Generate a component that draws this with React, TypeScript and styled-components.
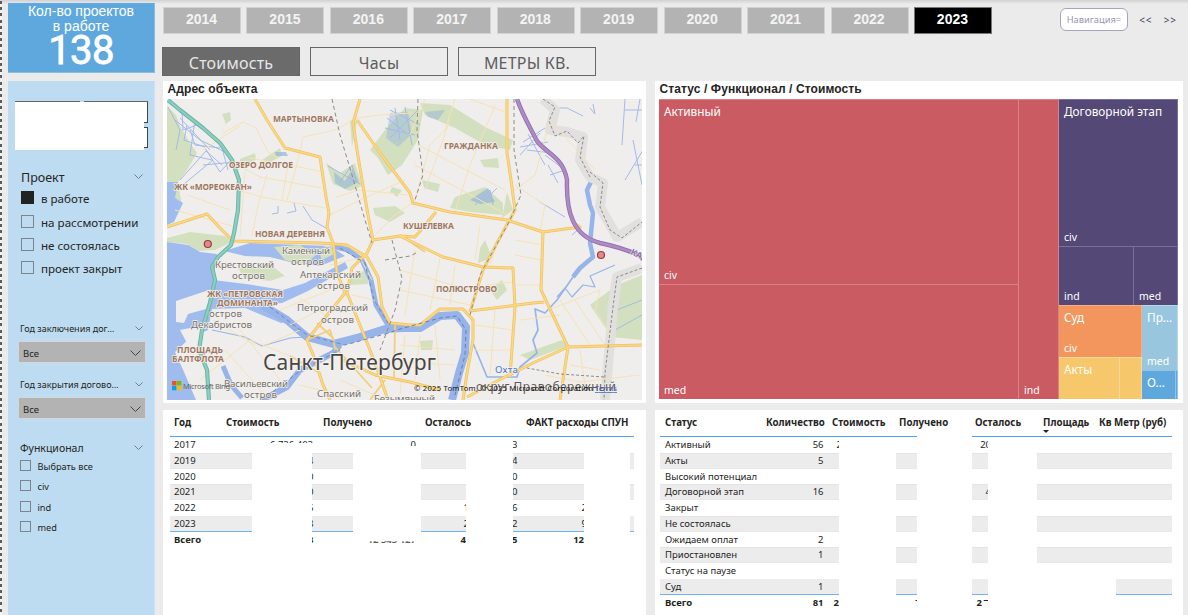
import React from 'react';
import styled, { createGlobalStyle } from 'styled-components';

const Global = createGlobalStyle`
  * { box-sizing: border-box; }
  body { margin: 0; overflow: hidden; }
`;

const ui = `'Noto Sans', 'Open Sans', sans-serif`;
const arial = `'Liberation Sans', Arial, sans-serif`;

const Page = styled.div`
  width: 1188px;
  height: 615px;
  overflow: hidden;
  display: flex;
  gap: 8px;
  padding: 3px 5px 0 0;
  background:
    repeating-linear-gradient(to bottom, #5c5c5c 0 3px, #f4f4f4 3px 6.2px) 0 1px / 2px 100% no-repeat,
    linear-gradient(#d2d2d2, #ebebeb) 0 0 / 100% 4px no-repeat,
    #ebebeb;
  color: #252423;
  font-family: ${ui};
`;

const Sidebar = styled.aside`
  width: 147px;
  margin-left: 8px;
  display: flex;
  flex-direction: column;
  gap: 8px;
  flex: none;
`;

const CountCard = styled.div`
  height: 70px;
  background: #5ea8dd;
  border: 1px solid #86bde6;
  border-width: 0 1px 1px 0;
  color: #fff;
  text-align: center;
  font: 14px/15px ${arial};
  padding-top: 1px;
`;
const CountNumber = styled.div`
  font: 400 40px/36px Roboto, sans-serif;
  margin: -1px 0 0 0;
  letter-spacing: -0.6px;
  -webkit-text-stroke: 0.8px #fff;
`;

const Filters = styled.div`
  flex: 1;
  background: #bddcf1;
  border-right: 1px solid #cbe3f4;
  padding: 20px 7px 0 7px;
`;
const SearchBox = styled.div`
  width: 133px;
  height: 49px;
  background:
    linear-gradient(#666, #666) 0 0 / 65px 1px no-repeat,
    linear-gradient(#666, #666) 69px 0 / 64px 1px no-repeat,
    linear-gradient(#444, #444) 132px 0 / 1px 21px no-repeat,
    linear-gradient(#444, #444) 129px 21px / 4px 1px no-repeat,
    linear-gradient(#444, #444) 129px 26px / 4px 1px no-repeat,
    linear-gradient(#444, #444) 132px 26px / 1px 21px no-repeat,
    linear-gradient(#444, #444) 129px 46px / 4px 1px no-repeat,
    linear-gradient(#fff, #fff) 0 1px / 129px 48px no-repeat,
    linear-gradient(#fff, #fff) 129px 1px / 3px 20px no-repeat,
    linear-gradient(#fff, #fff) 129px 27px / 3px 19px no-repeat;
`;

const FilterHead = styled.div<{ $top: number; $size: number; $x?: number }>`
  display: flex;
  align-items: center;
  justify-content: space-between;
  height: 16px;
  margin: ${p => p.$top}px 4px 0 ${p => p.$x ?? 6}px;
  font-size: ${p => p.$size}px;
  white-space: nowrap;
`;
const Option = styled.div<{ $h: number; $size: number; $gap: number; $x: number }>`
  display: flex;
  align-items: center;
  height: ${p => p.$h}px;
  gap: ${p => p.$gap}px;
  padding-left: ${p => p.$x}px;
  font-size: ${p => p.$size}px;
  white-space: nowrap;
`;
const Box = styled.span<{ $s: number; $on?: boolean }>`
  width: ${p => p.$s}px;
  height: ${p => p.$s}px;
  flex: none;
  margin-bottom: 2px;
  border: 1px solid ${p => (p.$on ? '#222' : '#7d858c')};
  background: ${p => (p.$on ? '#222' : 'transparent')};
`;
const Dropdown = styled.div`
  display: flex;
  align-items: center;
  justify-content: space-between;
  width: 128px;
  height: 22px;
  margin: 4px 0 0 3px;
  padding: 3px 4px 0 4px;
  background: #b3b3b3;
  border: 1px solid #d6d6d6;
  font-size: 9.5px;
`;

const Chevron = ({ w = 9, color = '#6f7f8b' }: { w?: number; color?: string }) => (
  <svg width={w} height={w / 2 + 1} viewBox={`0 0 ${w} ${w / 2 + 1}`} fill="none" stroke={color}>
    <path d={`M.5 .5L${w / 2} ${w / 2}L${w - 0.5} .5`} />
  </svg>
);

const Main = styled.main`
  width: 1020px;
  display: flex;
  flex-direction: column;
  flex: none;
`;
const YearRow = styled.div`
  display: flex;
  align-items: center;
  gap: 5.45px;
  height: 26px;
  margin-top: 4px;
`;
const Year = styled.div<{ $on?: boolean }>`
  width: 78px;
  height: 27px;
  flex: none;
  text-align: center;
  font: bold 14px/22px ${arial};
  padding-right: 1px;
  color: ${p => (p.$on ? '#fff' : '#f4f4f4')};
  background: ${p => (p.$on ? '#000' : '#b3b3b3')};
  border: 1px solid ${p => (p.$on ? '#777' : '#d2d2d2')};
`;
const NavButton = styled.div`
  width: 68px;
  height: 23px;
  margin: -2px 0 0 62.5px;
  border: 1px solid #a8a3be;
  border-radius: 6px;
  background: #fff;
  color: #9b95b3;
  font-size: 9.3px;
  line-height: 22px;
  text-align: center;
`;
const NavArrow = styled.span`
  margin-left: 6px;
  margin-top: -1px;
  font: 10px/20px ${ui};
  letter-spacing: 0.8px;
  color: #463f66;
`;
const ModeRow = styled.div`
  display: flex;
  gap: 10px;
  margin: 14px 0 5px -1px;
`;
const Mode = styled.div<{ $on?: boolean }>`
  width: 138px;
  height: 29px;
  font-size: 16px;
  line-height: 30px;
  text-align: center;
  letter-spacing: 0.2px;
  background: ${p => (p.$on ? '#6b6b6b' : '#ebebeb')};
  color: ${p => (p.$on ? '#e6e6e6' : '#5c5c5c')};
  border: 1px solid #666;
`;

const Panels = styled.div`
  display: grid;
  grid-template-columns: 483px 528px;
  grid-template-rows: 322px 205px;
  gap: 7px 9px;
`;
const Panel = styled.section`
  background: #fff;
  overflow: hidden;
`;
const Title = styled.h2`
  margin: 0 0 0 4.5px;
  height: 18px;
  font: bold 12px/17px ${arial};
  letter-spacing: 0.1px;
`;

/* ---------- treemap ---------- */
const Tree = styled.div`
  display: flex;
  width: 520px;
  height: 300px;
  margin-left: 4px;
  color: #fff;
`;
const Stack = styled.div<{ $w?: number; $h?: number; $row?: boolean }>`
  display: flex;
  flex-direction: ${p => (p.$row ? 'row' : 'column')};
  flex: none;
  ${p => p.$w && `width: ${p.$w}px;`}
  ${p => p.$h && `height: ${p.$h}px;`}
`;
const Tile = styled.div<{ $c: string; $line: string; $w?: number; $h?: number; $bare?: boolean }>`
  display: flex;
  flex-direction: column;
  flex: none;
  ${p => p.$w && `width: ${p.$w}px;`}
  ${p => p.$h && `height: ${p.$h}px;`}
  background: ${p => p.$c};
  border: solid ${p => p.$line};
  border-width: 1px 1px 0 0;
  padding: ${p => (p.$bare ? '0' : '3px 0 2px 5px')};
  font-size: 10.5px;
  line-height: 14px;
  white-space: nowrap;
  overflow: hidden;
`;
const Cat = styled.div`
  font-size: 11.8px;
  line-height: 16px;
`;
const Leaf = styled.div`
  margin-top: auto;
`;
const red = { $c: '#ca5b62', $line: '#d98389' };
const violet = { $c: '#544877', $line: '#796f97' };
const orange = { $c: '#f2965e', $line: '#f6b083' };
const yellow = { $c: '#f6c76b', $line: '#f9d996' };
const sky = { $c: '#99c6df', $line: '#b7d8ea' };
const blue = { $c: '#5ea8dd', $line: '#8fc3e8' };

/* ---------- tables ---------- */
const Table = styled.div<{ $pad: number }>`
  padding-left: ${p => p.$pad}px;
  font-size: 9.5px;
  line-height: 16px;
  white-space: nowrap;
`;
const Head = styled.div<{ $cols: string }>`
  display: grid;
  grid-template-columns: ${p => p.$cols};
  height: 26px;
  padding-top: 5px;
  font-weight: bold;
  font-size: 9.7px;
`;
const Rule = styled.div`
  display: flex;
  height: 1px;
`;
const Line = styled.i<{ $w: number; $hidden?: boolean }>`
  width: ${p => p.$w}px;
  background: ${p => (p.$hidden ? 'transparent' : '#4ca3ea')};
`;
const Row = styled.div<{ $bold?: boolean }>`
  display: flex;
  height: 15.75px;
  font-weight: ${p => (p.$bold ? 'bold' : 'normal')};
`;
const Seg = styled.div<{ $w: number; $band?: boolean; $last?: boolean; $pad?: number; $right?: boolean; $h?: number }>`
  width: ${p => p.$w}px;
  height: ${p => p.$h ?? 15.75}px;
  flex: none;
  display: flex;
  justify-content: ${p => (p.$right ? 'flex-end' : 'flex-start')};
  padding-left: ${p => p.$pad ?? 0}px;
  overflow: hidden;
  background: ${p => (p.$band ? '#ececec' : 'transparent')};
  box-shadow: ${p =>
    p.$last ? 'inset 0 -1px #6db4f0' : p.$band ? 'inset 0 1px #e4e4e4, inset 0 -1px #e8e8e8' : 'none'};
`;
const Space = styled.div<{ $w: number; $h?: number; $cut?: number; $pr?: number }>`
  width: ${p => p.$w}px;
  height: ${p => p.$h ?? 15.75}px;
  flex: none;
  overflow: hidden;
  display: flex;
  justify-content: flex-end;
  padding-right: ${p => p.$pr ?? 0}px;
  clip-path: inset(${p => p.$cut ?? 0}px 0 0 0);
`;
const Shift = styled.span<{ $x: number }>`
  margin-left: ${p => p.$x}px;
`;
const RightShift = styled.span<{ $x: number }>`
  margin-right: ${p => p.$x}px;
`;
const End = styled.span<{ $over?: number }>`
  margin-left: auto;
  margin-right: ${p => -(p.$over ?? 0)}px;
`;
const HeadCell = styled.span`
  line-height: 16px;
`;
const SortMark = styled.svg`
  display: block;
  margin-top: -1px;
`;

const yearRows = [
  { y: '2017', a: '3', c: '', d: '3', e: '' },
  { y: '2019', a: '4', c: '', d: '4', e: '' },
  { y: '2020', a: '0', c: '', d: '0', e: '' },
  { y: '2021', a: '0', c: '', d: '0', e: '' },
  { y: '2022', a: '6', c: '1', d: '6', e: '2' },
  { y: '2023', a: '8', c: '2', d: '2', e: '9' },
];

const statusRows = [
  ['Активный', '56', '2', '20'],
  ['Акты', '5', '', ''],
  ['Высокий потенциал', '', '', ''],
  ['Договорной этап', '16', '', '4'],
  ['Закрыт', '', '', ''],
  ['Не состоялась', '', '', ''],
  ['Ожидаем оплат', '2', '', ''],
  ['Приостановлен', '1', '', ''],
  ['Статус на паузе', '', '', ''],
  ['Суд', '1', '', ''],
];

/* ---------- map ---------- */
const MapSvg = styled.svg`
  display: block;
  margin-left: 4px;
  font-family: ${ui};
`;

const mainRoads = [
  'M255 99L267 120L285 148L320 157L326 197L329 213L327 227L333 243L337 273L345 293L307 340L314 357L323 385L330 400',
  'M360 99L353 123L357 150L362 180L368 215L373 240',
  'M357 120L380 153L410 193L413 203L450 212L507 220L543 232L580 227L572 222',
  'M507 99L507 153L511 180L515 210L497 243L483 270L470 312',
  'M543 232L541 290L568 347L560 400',
  'M400 236L443 257L483 267L513 268L515 307L510 377',
  'M470 311L533 303L544 302',
  'M642 345L568 347L533 363L503 378L467 397',
  'M167 227L207 214L220 228L233 241L320 243L347 245L367 257L378 277L382 307L390 323L410 325L420 325L440 309L463 309L473 320L473 340L467 373L463 400',
  'M347 293L352 268L367 253L373 240L400 236L415 237L436 212',
  'M347 293L370 350L380 377L388 400',
  'M343 360L375 375L410 382L440 390',
];
const secondRoads = [
  'M395 325L394 380M307 340L330 330L335 347L372 388M317 323L333 338L335 350',
  'M385 380L370 400M400 235L425 252M290 356L318 372',
];
const minorRoads = [
  'M223 133L243 122L256 128L268 152L278 158M203 150L240 126M303 137L298 160L287 200M303 137L335 130L350 122',
  'M237 165L260 177L322 188M238 190L262 197L325 208M267 175L258 205L252 236M288 165L282 200M245 172L240 236M250 158L325 172',
  'M356 118L380 115L412 113M336 197L360 190L408 195M330 215L360 200L405 180M370 240L395 215L412 203M425 99L410 135M455 99L445 130L430 145L415 200',
  'M470 99L505 112M495 105L470 165L455 212M418 145L505 190M415 165L480 200L507 215M450 120L425 190',
  'M515 190L535 175L550 120L595 170M515 185L545 205L540 230',
  'M175 210L232 226M187 195L230 210M200 380L250 340L300 360M240 330L280 380M225 350L265 395M213 320L255 345M300 330L265 345',
  'M280 310L330 290M290 325L320 310M300 298L340 325M330 265L360 258L372 280M352 295L375 300',
  'M400 270L470 290M400 290L470 305M415 250L405 315M440 258L430 310M455 265L450 305M480 225L475 260M500 235L490 265',
  'M515 240L543 245M515 255L541 260M517 285L541 285M485 285L513 282M475 325L513 330M475 350L512 350M495 310L490 375M520 320L560 315',
  'M548 310L600 290L595 310L612 337M560 300L590 345M575 300L605 345M570 365L600 370M580 350L585 385M545 375L580 382L640 375',
  'M400 345L455 350M398 362L455 365M420 335L415 380M435 325L440 380M405 335L400 395M340 380L375 395M300 385L340 395',
];
const ringWest =
  'M168 100L180 110L203 128L220 143L232 160L239 180L238 210L234 233L231 245L218 257L212 267L215 280L210 303L202 330L199 350L207 370L209 400';
const ringEast =
  'M517 99C523 116 530 127 537 141C545 153 563 156 567 180C566 212 573 236 600 243C615 246 630 251 643 257';

const MapView = () => (
  <MapSvg width="475" height="301" viewBox="167 99 475 301">
    <rect x="167" y="99" width="475" height="301" fill="#f0eeec" />
    <g fill="#d3e0bf">
      <path d="M167 106L176 115L181 128L190 143L197 153L187 170L178 182L182 205L172 222L167 225Z" />
      <path d="M167 238L190 232L225 236L232 242L215 250L197 251L187 244L167 242Z" />
      <path d="M370 150L385 130L405 108L423 110L418 140L402 165L388 175L378 158Z" />
      <path d="M420 103L450 105L487 128L513 140L510 150L485 145L455 128L425 115Z" />
      <path d="M326 163L340 173L355 163L362 186L350 191L333 184Z" />
      <path d="M455 197L485 187L503 203L503 215L470 212L450 208Z" />
      <path d="M642 275L617 285L590 305L600 320L612 337L642 340Z" />
      <path d="M520 355L562 340L567 346L530 360Z" />
      <path d="M353 273L370 270L368 284L350 285Z" />
      <path d="M222 114L230 112L231 120L226 124Z" />
      <path d="M373 208L395 206L405 213L390 222L375 215Z" />
      <path d="M422 180L440 184L438 192L424 188Z" />
      <path d="M485 240L492 258L478 263L480 248Z" />
      <path d="M490 290L502 280L507 290L497 300Z" />
      <path d="M420 341L433 340L432 350L421 350Z" />
      <path d="M262 160L280 148L282 156L266 164ZM240 159L255 153L256 160L240 165Z" />
      <path d="M350 120L357 122L352 147ZM392 187L402 190L397 197L390 192Z" />
      <path d="M480 160L498 158L499 168L484 167ZM507 192L502 218L513 210Z" />
    </g>
    <g fill="#a0bcee">
      <path d="M167 182L178 182L175 198L183 203L174 222L167 225Z" />
      <path d="M167 242L188 245L200 252L217 254L213 280L246 284L283 290L305 283L345 262L348 268L308 291L282 303L262 305L292 320L281 323L245 308L212 309L208 330L190 338L175 352L184 372L196 400L167 400Z" />
      <path d="M224 251L250 243L330 246L345 256L320 266L290 262L270 257L245 256Z" />
    </g>
    <path d="M176 301L200 293L212 289L206 309L188 314L184 323L176 322Z" fill="#f0eeec" />
    <path d="M180 330L200 326L200 345L188 345Z" fill="#f0eeec" />
    <g fill="#d3e0bf">
      <path d="M274 247L300 245L316 255L304 265L285 260Z" />
      <path d="M318 249L332 247L334 254L322 260Z" />
      <path d="M238 268L272 266L285 276L270 281L244 278Z" />
    </g>
    <g fill="#95b4dc">
      <path d="M334 172L345 181L353 168L359 182L345 189L335 183Z" opacity=".6" />
      <path d="M390 113L408 112L412 134L398 147L386 138Z" opacity=".45" />
      <path d="M275 152L286 152L288 156L276 156ZM470 200L488 188L495 202L480 204Z" opacity=".7" />
      <path d="M425 112L445 110L438 120L428 117Z" opacity=".5" />
    </g>
    <g fill="none" stroke="#96b4ea" strokeLinejoin="round">
      <path d="M332 246L348 250L362 260L371 280L376 305L388 325L402 328" strokeWidth="5" />
      <path d="M262 305L287 320L307 337L333 344L360 337L385 329L402 328L420 328L440 316L457 315L466 327L465 353L459 373L452 400" strokeWidth="8" />
      <path d="M340 345L333 353L300 370L287 387L262 400" strokeWidth="6" />
      <path d="M592 180L587 190L590 205L593 213L590 243L593 257L580 268L573 277" strokeWidth="4.5" />
      <path d="M573 277L557 300L545 313L535 309L538 330L533 340L537 353L520 367L517 377L487 377L480 360L473 343" strokeWidth="1.7" />
      <path d="M557 297L565 288L572 297L583 285L595 287L590 276L615 265" strokeWidth="1.2" />
      <path d="M212 330L245 337L262 346L290 338L307 337" strokeWidth="1.2" />
      <path d="M223 366L231 385L242 398" strokeWidth="5" />
    </g>
    <g fill="none" stroke="#a3baea" strokeWidth="1">
      <path d="M168 107L180 130L176 150M182 112L183 130L197 125M187 125L184 140L205 147M190 130L195 145L220 148M195 120L190 155L212 160M175 120L200 140L225 152M205 148L220 172L233 158M180 118L210 150M180 180L206 151L222 165M184 184L213 160M222 148L228 170M203 165L235 162" />
      <path d="M387 118L405 132M390 110L420 125M385 128L415 135M395 108L400 140M405 107L412 145M418 110L390 138M328 166L360 184M340 182L352 165L357 183" />
      <path d="M523 142L545 128M520 147L548 142M527 150L552 153M535 137L560 160M528 134L545 165M520 155L540 133M545 155L565 170M550 175L565 170M548 165L558 183" />
      <path d="M547 108L567 108L583 116M590 108L595 114L593 104M625 99L622 145M640 99L636 122M625 110L642 110M633 140L642 185M643 150L625 180M635 165L642 165" />
      <path d="M617 310L642 300M615 330L642 315M540 202L565 217M572 235L580 228M475 205L490 190L493 205M497 188L483 202M272 214L278 213L278 206M287 213L296 211L294 203M303 206L312 220L326 228" />
    </g>
    <g fill="none" stroke="#e1e0de" strokeWidth="10" strokeLinejoin="round">
      <path d="M543 99L555 110L550 130L567 132L583 137L580 160L590 177L603 183L600 207L617 237L642 222" />
      <path d="M642 268L617 277L613 307L605 400" />
    </g>
    <g fill="none" stroke="#f6e2b4" strokeWidth="1">
      {minorRoads.map(d => <path key={d} d={d} />)}
    </g>
    <g fill="none" stroke="#f3cd7c" strokeWidth="1.8" strokeLinejoin="round">
      {secondRoads.map(d => <path key={d} d={d} />)}
    </g>
    <g fill="none" stroke="#efbf66" strokeWidth="3" strokeLinejoin="round">
      {mainRoads.map(d => <path key={d} d={d} />)}
    </g>
    <g fill="none" stroke="#fbd97e" strokeWidth="1.7" strokeLinejoin="round">
      {mainRoads.map(d => <path key={d} d={d} />)}
    </g>
    <g fill="none" stroke="#8e8a86" strokeWidth="1" strokeDasharray="4 3">
      <path d="M332 99L340 135L352 175L365 220L372 243" />
      <path d="M418 99L417 130L423 175L415 200M514 99L514 150L521 195L510 220L480 275L470 315" />
      <path d="M543 99L555 107L549 121L555 136L567 131L578 143L584 136L580 157L590 177" strokeDasharray="3 2" />
      <path d="M590 172L603 183L600 207L610 230L622 238L642 222M642 268L617 277L613 307L605 373L604 400M604 377L560 374L527 368" strokeDasharray="3 2" />
      <path d="M385 260L410 256L416 253M392 240L402 278L395 310L380 350" />
      <path d="M385 334L400 329L440 318L457 316L466 330L465 355L455 395" stroke="#6680ad" />
      <path d="M340 248L365 263L374 300L388 323M270 307L307 335L345 345L385 334M262 400L300 371L340 350" stroke="#7489b0" />
    </g>
    <path d={ringWest} fill="none" stroke="#6db5a7" strokeWidth="4.2" strokeLinejoin="round" />
    <path d={ringWest} fill="none" stroke="#8ccfc0" strokeWidth="2.2" strokeLinejoin="round" />
    <path d={ringEast} fill="none" stroke="#9270ae" strokeWidth="4.4" />
    <path d={ringEast} fill="none" stroke="#ae8bc4" strokeWidth="2.6" />
    <g fontSize="8.5" fontWeight="bold" fill="#9d7863" stroke="#f3f0ec" strokeWidth="1.6" paintOrder="stroke" strokeLinejoin="round">
      <text x="273" y="122" textLength="61">МАРТЫНОВКА</text>
      <text x="444" y="149" textLength="54">ГРАЖДАНКА</text>
      <text x="229" y="168" textLength="64">ОЗЕРО ДОЛГОЕ</text>
      <text x="174" y="190" textLength="78">ЖК «МОРЕОКЕАН»</text>
      <text x="255" y="237" textLength="70">НОВАЯ ДЕРЕВНЯ</text>
      <text x="403" y="229" textLength="51">КУШЕЛЕВКА</text>
      <text x="436" y="292" textLength="61">ПОЛЮСТРОВО</text>
      <text x="207" y="297" textLength="76">ЖК «ПЕТРОВСКАЯ</text>
      <text x="217" y="306" textLength="61">ДОМИНАНТА»</text>
      <text x="177" y="353" textLength="46">ПЛОЩАДЬ</text>
      <text x="172" y="362" textLength="52">БАЛТФЛОТА</text>
    </g>
    <g fontSize="9.8" fill="#77716c" stroke="#f3f1ee" strokeWidth="1.4" paintOrder="stroke" strokeLinejoin="round">
      <text x="282" y="254" textLength="48">Каменный</text>
      <text x="291" y="265" textLength="33">остров</text>
      <text x="215" y="268" textLength="59">Крестовский</text>
      <text x="232" y="279" textLength="33">остров</text>
      <text x="300" y="278" textLength="61">Аптекарский</text>
      <text x="317" y="289" textLength="33">остров</text>
      <text x="297" y="311" textLength="71">Петроградский</text>
      <text x="321" y="323" textLength="33">остров</text>
      <text x="209" y="317" textLength="33">остров</text>
      <text x="191" y="328" textLength="61">Декабристов</text>
      <text x="224" y="387" textLength="64">Васильевский</text>
      <text x="244" y="398" textLength="33">остров</text>
      <text x="317" y="397" textLength="44">Спасский</text>
      <text x="374" y="402" textLength="61">Безымянный</text>
      <text x="476" y="391" fontSize="12" fill="#5f5a56" textLength="140">округ Правобережный</text>
      <text x="495" y="373" fill="#4a77d2" textLength="23">Охта</text>
    </g>
    <text x="263" y="370" fontSize="21" fill="#484644" stroke="#f4f2ef" strokeWidth="2" paintOrder="stroke" textLength="173">Санкт-Петербург</text>
    <text x="630" y="254" fontSize="8.5" fontWeight="bold" fill="#8e6daa" stroke="#f3f0ec" strokeWidth="1" paintOrder="stroke" transform="rotate(25 630 254)">КАД</text>
    <rect x="172" y="381" width="4.4" height="4.4" fill="#f25022" />
    <rect x="176.9" y="381" width="4.4" height="4.4" fill="#7fba00" />
    <rect x="172" y="385.9" width="4.4" height="4.4" fill="#00a4ef" />
    <rect x="176.9" y="385.9" width="4.4" height="4.4" fill="#ffb900" />
    <text x="183" y="389" fontSize="7.5" fill="#666" textLength="47">Microsoft Bing</text>
    <g fontSize="7.6" fill="#111">
      <text x="414" y="391" textLength="64">© 2025 TomTom,</text>
      <text x="480" y="391" textLength="113">© 2025 Microsoft Corporation</text>
      <text x="595" y="391" textLength="22" fill="#4465b5" textDecoration="underline">Terms</text>
    </g>
    <g fill="#e08a90" stroke="#a0393f" strokeWidth="1.2">
      <circle cx="207.8" cy="244" r="3.5" />
      <circle cx="601" cy="255" r="3.5" />
    </g>
  </MapSvg>
);

export default function App() {
  return (
    <Page>
      <Global />
      <Sidebar>
        <CountCard>
          <div>Кол-во проектов</div>
          <div>в работе</div>
          <CountNumber>138</CountNumber>
        </CountCard>
        <Filters>
          <SearchBox />
          <FilterHead $top={19} $size={12.5}>Проект<Chevron /></FilterHead>
          <div>
            {['в работе', 'на рассмотрении', 'не состоялась', 'проект закрыт'].map((t, i) => (
              <Option key={t} $h={i === 0 ? 26 : 23.2} $size={11.6} $gap={7} $x={6}>
                <Box $s={13} $on={i === 0} />{t}
              </Option>
            ))}
          </div>
          <FilterHead $top={40.4} $size={9} $x={5}>Год заключения дог…<Chevron w={8} /></FilterHead>
          <Dropdown>Все<Chevron w={11} color="#444" /></Dropdown>
          <FilterHead $top={14} $size={9} $x={5}>Год закрытия догово…<Chevron w={8} /></FilterHead>
          <Dropdown>Все<Chevron w={11} color="#444" /></Dropdown>
          <FilterHead $top={21} $size={10.5} $x={5}>Функционал<Chevron /></FilterHead>
          <div>
            {['Выбрать все', 'civ', 'ind', 'med'].map(t => (
              <Option key={t} $h={20.5} $size={9.2} $gap={6.5} $x={5}>
                <Box $s={11} />{t}
              </Option>
            ))}
          </div>
        </Filters>
      </Sidebar>

      <Main>
        <YearRow>
          {[2014, 2015, 2016, 2017, 2018, 2019, 2020, 2021, 2022, 2023].map(y => (
            <Year key={y} $on={y === 2023}>{y}</Year>
          ))}
          <NavButton>Навигация=</NavButton>
          <NavArrow>&lt;&lt;</NavArrow>
          <NavArrow>&gt;&gt;</NavArrow>
        </YearRow>
        <ModeRow>
          <Mode $on>Стоимость</Mode>
          <Mode>Часы</Mode>
          <Mode>МЕТРЫ КВ.</Mode>
        </ModeRow>
        <Panels>
          <Panel>
            <Title>Адрес объекта</Title>
            <MapView />
          </Panel>
          <Panel>
            <Title>Статус / Функционал / Стоимость</Title>
            <Tree>
              <Stack $w={360}>
                <Tile {...red} $h={184.5}><Cat>Активный</Cat><Leaf>civ</Leaf></Tile>
                <Tile {...red} $h={115}><Leaf>med</Leaf></Tile>
              </Stack>
              <Tile {...red} $w={40} $h={299.5}><Leaf>ind</Leaf></Tile>
              <Stack $w={119}>
                <Tile {...violet} $h={147}><Cat>Договорной этап</Cat><Leaf>civ</Leaf></Tile>
                <Stack $row $h={59}>
                  <Tile {...violet} $w={75}><Leaf>ind</Leaf></Tile>
                  <Tile {...violet} $w={44}><Leaf>med</Leaf></Tile>
                </Stack>
                <Stack $row $h={93.5}>
                  <Stack $w={83}>
                    <Tile {...orange} $h={51.5}><Cat>Суд</Cat><Leaf>civ</Leaf></Tile>
                    <Stack $row $h={42}>
                      <Tile {...yellow} $w={61}><Cat>Акты</Cat></Tile>
                      <Tile {...yellow} $w={22} />
                    </Stack>
                  </Stack>
                  <Stack $w={36}>
                    <Tile {...sky} $h={64.5}><Cat>Пр…</Cat><Leaf>med</Leaf></Tile>
                    <Stack $row $h={29}>
                      <Tile {...blue} $w={34}><Cat>О…</Cat></Tile>
                      <Tile {...blue} $w={2} $bare />
                    </Stack>
                  </Stack>
                </Stack>
              </Stack>
            </Tree>
          </Panel>

          <Panel>
            <Table $pad={7}>
              <Head $cols="56px 97px 102px 101px 110px">
                <HeadCell><Shift $x={4}>Год</Shift></HeadCell>
                <HeadCell>Стоимость</HeadCell>
                <HeadCell>Получено</HeadCell>
                <HeadCell>Осталось</HeadCell>
                <HeadCell>ФАКТ расходы СПУН</HeadCell>
              </Head>
              <Rule><Line $w={464} /></Rule>
              {yearRows.map((r, i) => {
                const band = i % 2 === 1;
                const last = i === 5;
                return (
                  <Row key={r.y}>
                    <Seg $w={82} $band={band} $last={last} $pad={4}>{r.y}</Seg>
                    {i === 0 ? (
                      <Space $w={101} $h={6} $pr={40}>6 736 403</Space>
                    ) : (
                      <>
                        <Space $w={60} />
                        <Seg $w={41} $band={band} $last={last}><Shift $x={-4}>{r.a}</Shift></Seg>
                      </>
                    )}
                    <Space $w={68} $h={i === 0 ? 9 : undefined} $pr={5}>{i === 0 && '0'}</Space>
                    <Seg $w={45} $band={band} $last={last} $right><RightShift $x={-3}>{r.c}</RightShift></Seg>
                    <Space $w={47} />
                    <Seg $w={71} $band={band} $last={last}><Shift $x={-1}>{r.d}</Shift><End $over={3}>{r.e}</End></Seg>
                    <Space $w={46} />
                    <Seg $w={4} $band={band} $last={last} />
                  </Row>
                );
              })}
              <Row $bold>
                <Seg $w={82} $pad={4}>Всего</Seg>
                <Space $w={60} />
                <Seg $w={41}><Shift $x={-4}>8</Shift></Seg>
                <Space $w={68} $h={11.2} $cut={10} $pr={5}>12 345 127</Space>
                <Seg $w={45} $right>4</Seg>
                <Space $w={47} />
                <Seg $w={71}><Shift $x={-1}>5</Shift><End>12</End></Seg>
              </Row>
            </Table>
          </Panel>

          <Panel>
            <Table $pad={5}>
              <Head $cols="106px 66px 67px 76px 68px 56px 72px">
                <HeadCell><Shift $x={5}>Статус</Shift></HeadCell>
                <HeadCell>Количество</HeadCell>
                <HeadCell>Стоимость</HeadCell>
                <HeadCell>Получено</HeadCell>
                <HeadCell>Осталось</HeadCell>
                <HeadCell>Площадь
                  <SortMark width="6" height="3"><path d="M0 0H6L3 3Z" fill="#222" /></SortMark>
                </HeadCell>
                <HeadCell>Кв Метр (руб)</HeadCell>
              </Head>
              <Rule><Line $w={257} /><Line $w={55} $hidden /><Line $w={200} /></Rule>
              {statusRows.map(([name, n, cost, left], i) => {
                const band = i % 2 === 1;
                const last = i === 9;
                return (
                  <Row key={name}>
                    <Seg $w={163.5} $band={band} $last={last} $pad={5}>{name}<End>{n}</End></Seg>
                    <Seg $w={15.5} $band={band} $last={last} $right><RightShift $x={-3}>{cost}</RightShift></Seg>
                    <Space $w={57} />
                    <Seg $w={21} $band={band} $last={last} />
                    <Space $w={55} />
                    <Seg $w={16} $band={band} $last={last} $right><RightShift $x={-3}>{left}</RightShift></Seg>
                    <Space $w={last ? 128 : 49} />
                    <Seg $w={last ? 56 : 135} $band={band} $last={last} />
                  </Row>
                );
              })}
              <Row $bold>
                <Seg $w={163.5} $pad={5}>Всего<End>81</End></Seg>
                <Seg $w={15.5} $right>2</Seg>
                <Space $w={57} />
                <Seg $w={21} $h={6.5} $right><RightShift $x={-2}>1</RightShift></Seg>
                <Space $w={55} />
                <Seg $w={10} $right>2</Seg>
                <Seg $w={6} $h={6.5} $right><RightShift $x={-1}>7</RightShift></Seg>
              </Row>
            </Table>
          </Panel>
        </Panels>
      </Main>
    </Page>
  );
}
